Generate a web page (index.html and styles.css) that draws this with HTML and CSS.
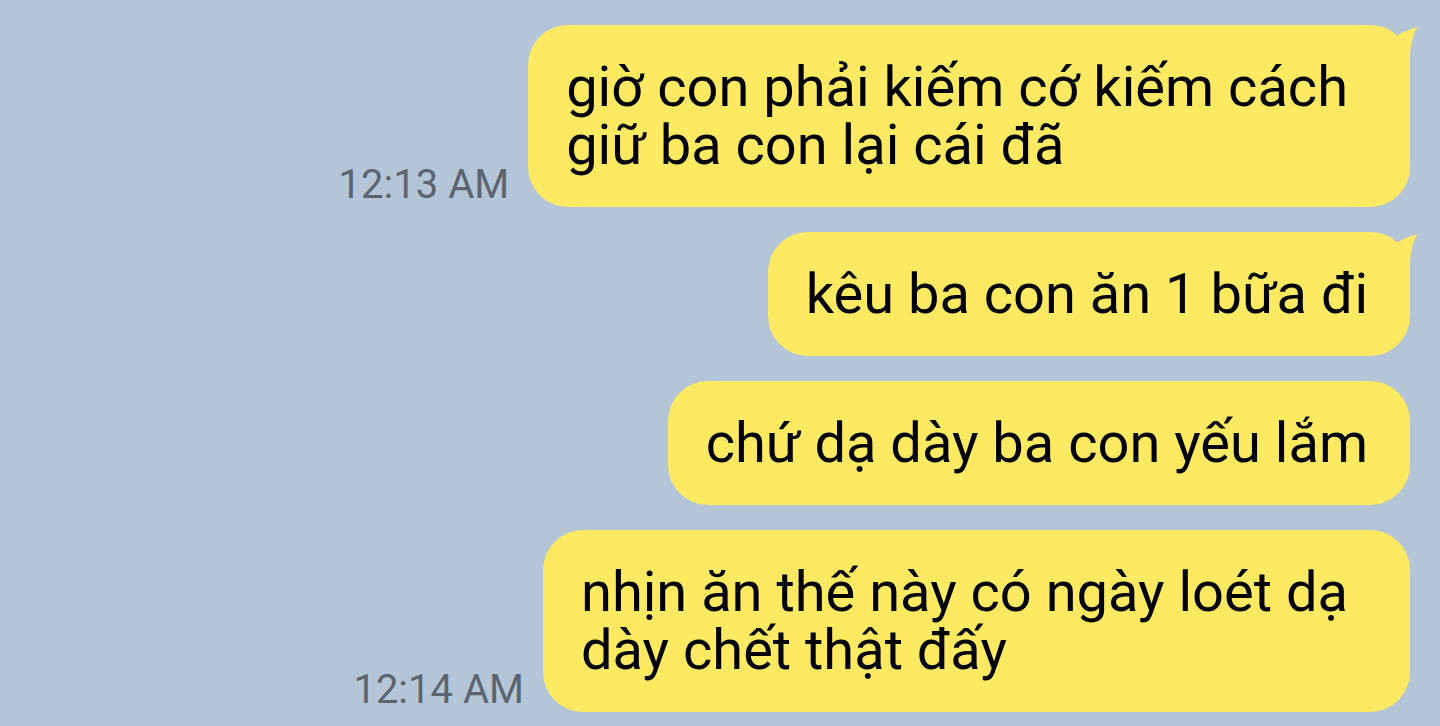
FILE: index.html
```html
<!DOCTYPE html>
<html lang="vi">
<head>
  <meta charset="UTF-8">
  <title>Tin nhắn</title>
  <link rel="stylesheet" href="styles.css">
</head>
<body>
  <div class="chat">

    <div class="row">
      <span class="time">12:13 AM</span>
      <div class="bubble multi">
        giờ con phải kiếm cớ kiếm cách<br>giữ ba con lại cái đã
        <svg class="tail" viewBox="0 0 40 44" width="40" height="44">
          <path d="M0 44 L0 1.3 Q10 4 17 10.5 Q26 5 37.5 2 Q31 12 30 30 L30 44 Z"/>
        </svg>
      </div>
    </div>

    <div class="row">
      <div class="bubble">
        kêu ba con ăn 1 bữa đi
        <svg class="tail" viewBox="0 0 40 44" width="40" height="44">
          <path d="M0 44 L0 1.3 Q10 4 17 10.5 Q26 5 37.5 2 Q31 12 30 30 L30 44 Z"/>
        </svg>
      </div>
    </div>

    <div class="row">
      <div class="bubble">chứ dạ dày ba con yếu lắm</div>
    </div>

    <div class="row">
      <span class="time">12:14 AM</span>
      <div class="bubble multi">nhịn ăn thế này có ngày loét dạ<br>dày chết thật đấy</div>
    </div>

  </div>
</body>
</html>
```

FILE: styles.css
```css
html, body {
  margin: 0;
  height: 100%;
}

body {
  background-color: #b4c5d7;
  font-family: Roboto, "Noto Sans", sans-serif;
  overflow: hidden;
}

.chat {
  display: flex;
  flex-direction: column;
  align-items: flex-end;
  padding: 25px 30px 0 0;
}

.row {
  display: flex;
  align-items: flex-end;
  gap: 19px;
  margin-bottom: 25px;
}

.time {
  font-size: 40px;
  line-height: 40px;
  padding-bottom: 2px;
  color: #5a6571;
  white-space: nowrap;
}

.bubble {
  position: relative;
  background-color: #fde962;
  color: #000;
  font-size: 56px;
  line-height: 58px;
  padding: 33px 42px 33px 38px;
  border-radius: 40px;
  white-space: nowrap;
}

/* wrapped messages keep the wider box of the wrapped line */
.bubble.multi {
  padding-right: 62px;
}

.tail {
  position: absolute;
  top: 0;
  right: -10px;
  fill: #fde962;
}
```
